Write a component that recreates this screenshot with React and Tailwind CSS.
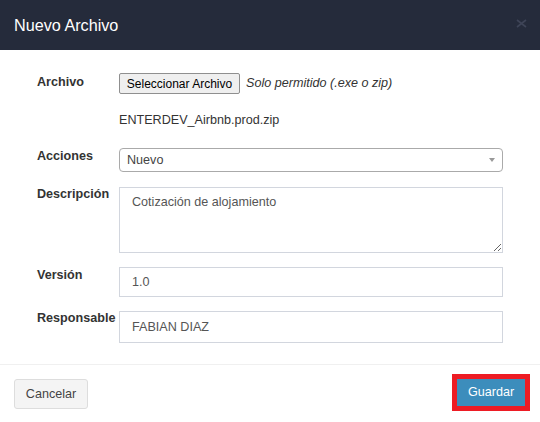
import React from 'react';

const Label = ({ children, className = '' }) => (
    <div className={`text-[12.6px] leading-[18px] font-bold text-[#333] ${className}`}>{children}</div>
);

const App = () => {
    return (
        <div className="w-[540px] h-[422px] bg-white font-['Liberation_Sans',Arial,sans-serif] overflow-hidden">
            {/* Header */}
            <div className="h-[50px] bg-[#252b3b] flex items-center justify-between pl-[14px] pr-[13px]">
                <h4 className="text-[16.2px] text-white leading-none">Nuevo Archivo</h4>
                <svg width="11" height="9" viewBox="0 0 11 9" className="mt-[-3px]">
                    <path d="M1 1 L10 8 M10 1 L1 8" stroke="#3e4457" strokeWidth="1.6" />
                </svg>
            </div>

            {/* Body */}
            <div className="pl-[37px] pr-[37px] pt-[23px] h-[314px]">
                {/* Archivo */}
                <div className="grid grid-cols-[82px_1fr]">
                    <Label className="pt-0">Archivo</Label>
                    <div>
                        <div className="flex items-center">
                            <span className="h-[21px] w-[121px] flex items-center justify-center border border-[#8f8f8f] bg-[#efefef] rounded-[2px] text-[12px] text-black">
                                Seleccionar Archivo
                            </span>
                            <span className="ml-[6px] text-[12.6px] italic text-[#333]">Solo permitido (.exe o zip)</span>
                        </div>
                        <div className="mt-[17px] text-[12.6px] leading-[18px] text-[#333]">ENTERDEV_Airbnb.prod.zip</div>
                    </div>
                </div>

                {/* Acciones */}
                <div className="grid grid-cols-[82px_1fr] mt-[19px]">
                    <Label className="mt-[-1px]">Acciones</Label>
                    <div className="h-[24px] border border-[#aaa] rounded-[4px] flex items-center justify-between pl-[7px] pr-[7px]">
                        <span className="text-[12.6px] text-[#444]">Nuevo</span>
                        <span className="w-0 h-0 border-l-[3px] border-r-[3px] border-t-[4px] border-l-transparent border-r-transparent border-t-[#999]" />
                    </div>
                </div>

                {/* Descripción */}
                <div className="grid grid-cols-[82px_1fr] mt-[15px]">
                    <Label className="mt-[-2px]">Descripción</Label>
                    <textarea
                        readOnly
                        defaultValue="Cotización de alojamiento"
                        className="h-[66px] w-full border border-[#d2d6de] px-[12px] pt-[5px] pb-[6px] text-[12.6px] leading-[18px] text-[#555] outline-none resize-y"
                    />
                </div>

                {/* Versión */}
                <div className="grid grid-cols-[82px_1fr] mt-[14px]">
                    <Label className="mt-[-1px]">Versión</Label>
                    <input
                        readOnly
                        defaultValue="1.0"
                        className="h-[30px] w-full border border-[#d2d6de] px-[12px] text-[12.6px] text-[#555] outline-none"
                    />
                </div>

                {/* Responsable */}
                <div className="grid grid-cols-[82px_1fr] mt-[14px]">
                    <Label className="mt-[-2px]">Responsable</Label>
                    <input
                        readOnly
                        defaultValue="FABIAN DIAZ"
                        className="h-[32px] w-full border border-[#d2d6de] px-[12px] text-[12.6px] text-[#555] outline-none"
                    />
                </div>
            </div>

            {/* Footer */}
            <div className="border-t border-[#f0f0f0] flex justify-between items-start pl-[14px] pr-[10px] pt-[9px]">
                <button className="mt-[5px] w-[74px] h-[30px] bg-[#f4f4f4] border border-[#ddd] rounded-[3px] text-[12.6px] text-[#444]">
                    Cancelar
                </button>
                <div className="border-[5px] border-[#ed1c24]">
                    <button className="w-[68px] h-[27px] bg-[#3c8dbc] text-white text-[12.6px] flex items-center justify-center">
                        Guardar
                    </button>
                </div>
            </div>
        </div>
    );
};

export default App;
